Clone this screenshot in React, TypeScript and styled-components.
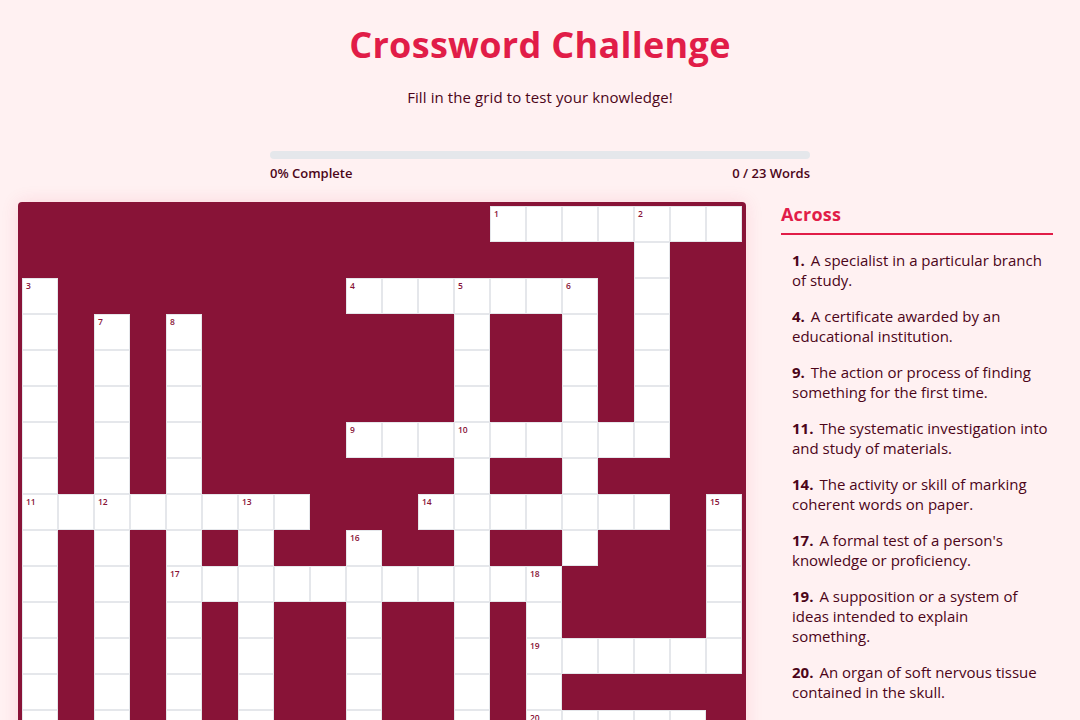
import React from "react";
import styled, { createGlobalStyle } from "styled-components";

const GlobalStyle = createGlobalStyle`
  html, body {
    margin: 0;
    padding: 0;
    background: #fff1f2;
  }
  body {
    font-family: "Open Sans", "Noto Sans", sans-serif;
    color: #4c0519;
  }
  * {
    box-sizing: border-box;
  }
`;

const CELL = 36;

// '#' = block, '.' = open cell
const LAYOUT = [
  "#############.......",
  "#################.##",
  ".########.......#.##",
  ".#.#.#######.##.#.##",
  ".#.#.#######.##.#.##",
  ".#.#.#######.##.#.##",
  ".#.#.####.........##",
  ".#.#.#######.##.####",
  "........###.......#.",
  ".#.#.#.##.##.##.###.",
  ".#.#...........####.",
  ".#.#.#.##.##.#.####.",
  ".#.#.#.##.##.#......",
  ".#.#.#.##.##.#.#####",
  ".#.#.#.##.##.#.....#",
  ".#.#.#.##.##.#.#####",
  "..........##.#.#####",
  "#.####.##.##.#######",
  "#.######......######",
  "#.##################",
];

const NUMBERS: Record<string, number> = {
  "0-13": 1,
  "0-17": 2,
  "2-0": 3,
  "2-9": 4,
  "2-12": 5,
  "2-15": 6,
  "3-2": 7,
  "3-4": 8,
  "6-9": 9,
  "6-12": 10,
  "8-0": 11,
  "8-2": 12,
  "8-6": 13,
  "8-11": 14,
  "8-19": 15,
  "9-9": 16,
  "10-4": 17,
  "10-14": 18,
  "12-14": 19,
  "14-14": 20,
  "16-0": 21,
  "18-6": 22,
};

const ACROSS = [
  { n: 1, text: "A specialist in a particular branch of study." },
  { n: 4, text: "A certificate awarded by an educational institution." },
  { n: 9, text: "The action or process of finding something for the first time." },
  { n: 11, text: "The systematic investigation into and study of materials." },
  { n: 14, text: "The activity or skill of marking coherent words on paper." },
  { n: 17, text: "A formal test of a person's knowledge or proficiency." },
  { n: 19, text: "A supposition or a system of ideas intended to explain something." },
  { n: 20, text: "An organ of soft nervous tissue contained in the skull." },
  { n: 21, text: "The process of learning and acquiring knowledge." },
  { n: 22, text: "A place where books are kept for reading." },
];

const DOWN = [
  { n: 2, text: "A person who teaches at a university." },
  { n: 3, text: "The ability to acquire and apply knowledge and skills." },
  { n: 5, text: "A written essay or dissertation." },
  { n: 6, text: "A meeting for discussion or training." },
  { n: 7, text: "A lesson or class on a subject." },
  { n: 8, text: "The study of the past." },
];

const Page = styled.div`
  width: 1080px;
  padding-bottom: 40px;
`;

const Header = styled.header`
  display: flex;
  flex-direction: column;
  align-items: center;
  padding-top: 22px;
`;

const Title = styled.h1`
  margin: 0;
  font-size: 36px;
  line-height: 46px;
  font-weight: 700;
  letter-spacing: 0.3px;
  color: #e11d48;
`;

const Subtitle = styled.p`
  margin: 18px 0 0;
  font-size: 15px;
  line-height: 22px;
  letter-spacing: 0.1px;
  color: #4c0519;
`;

const Progress = styled.div`
  width: 540px;
  margin: 43px auto 0;
`;

const Track = styled.div`
  height: 8px;
  border-radius: 999px;
  background: #e5e7eb;
  overflow: hidden;
`;

const Fill = styled.div`
  height: 100%;
  background: #e11d48;
`;

const ProgressLabels = styled.div`
  display: flex;
  justify-content: space-between;
  margin-top: 6px;
  font-size: 13px;
  line-height: 16px;
  font-weight: 600;
  color: #4c0519;
`;

const Main = styled.main`
  display: flex;
  align-items: flex-start;
  gap: 35px;
  padding-left: 18px;
  margin-top: 21px;
`;

const Board = styled.div`
  display: grid;
  grid-template-columns: repeat(20, ${CELL}px);
  grid-auto-rows: ${CELL}px;
  padding: 4px;
  background: #881337;
  border-radius: 4px;
  box-shadow: 0 0 18px rgba(225, 29, 72, 0.12);
`;

const Cell = styled.div<{ $open: boolean }>`
  position: relative;
  background: ${(p) => (p.$open ? "#ffffff" : "transparent")};
  border: 1px solid ${(p) => (p.$open ? "#e5e7eb" : "transparent")};
`;

const CellNumber = styled.span`
  position: absolute;
  top: 2px;
  left: 3px;
  font-size: 8.5px;
  line-height: 10px;
  font-weight: 600;
  color: #881337;
`;

const Clues = styled.aside`
  width: 272px;
`;

const ClueHeading = styled.h2`
  margin: 0;
  padding-bottom: 7px;
  font-size: 18px;
  line-height: 24px;
  letter-spacing: 0.2px;
  font-weight: 700;
  color: #e11d48;
  border-bottom: 2px solid #e11d48;
`;

const ClueList = styled.ol`
  list-style: none;
  margin: 7px 0 28px;
  padding: 0;
`;

const ClueItem = styled.li`
  padding: 8px 5.5px 8px 11px;
  font-size: 15px;
  line-height: 20px;
  color: #4c0519;
`;

const ClueNum = styled.strong`
  font-weight: 700;
  margin-right: 6px;
`;

const ClueSection: React.FC<{
  title: string;
  items: { n: number; text: string }[];
}> = ({ title, items }) => (
  <>
    <ClueHeading>{title}</ClueHeading>
    <ClueList>
      {items.map((c) => (
        <ClueItem key={c.n}>
          <ClueNum>{c.n}.</ClueNum>
          {c.text}
        </ClueItem>
      ))}
    </ClueList>
  </>
);

const App: React.FC = () => {
  const solved = 0;
  const total = 23;
  const pct = Math.round((solved / total) * 100);

  return (
    <Page>
      <GlobalStyle />
      <Header>
        <Title>Crossword Challenge</Title>
        <Subtitle>Fill in the grid to test your knowledge!</Subtitle>
      </Header>

      <Progress>
        <Track>
          <Fill style={{ width: `${pct}%` }} />
        </Track>
        <ProgressLabels>
          <span>{pct}% Complete</span>
          <span>
            {solved} / {total} Words
          </span>
        </ProgressLabels>
      </Progress>

      <Main>
        <Board>
          {LAYOUT.map((row, r) =>
            row.split("").map((ch, c) => {
              const num = NUMBERS[`${r}-${c}`];
              return (
                <Cell key={`${r}-${c}`} $open={ch === "."}>
                  {num && <CellNumber>{num}</CellNumber>}
                </Cell>
              );
            })
          )}
        </Board>

        <Clues>
          <ClueSection title="Across" items={ACROSS} />
          <ClueSection title="Down" items={DOWN} />
        </Clues>
      </Main>
    </Page>
  );
};

export default App;
